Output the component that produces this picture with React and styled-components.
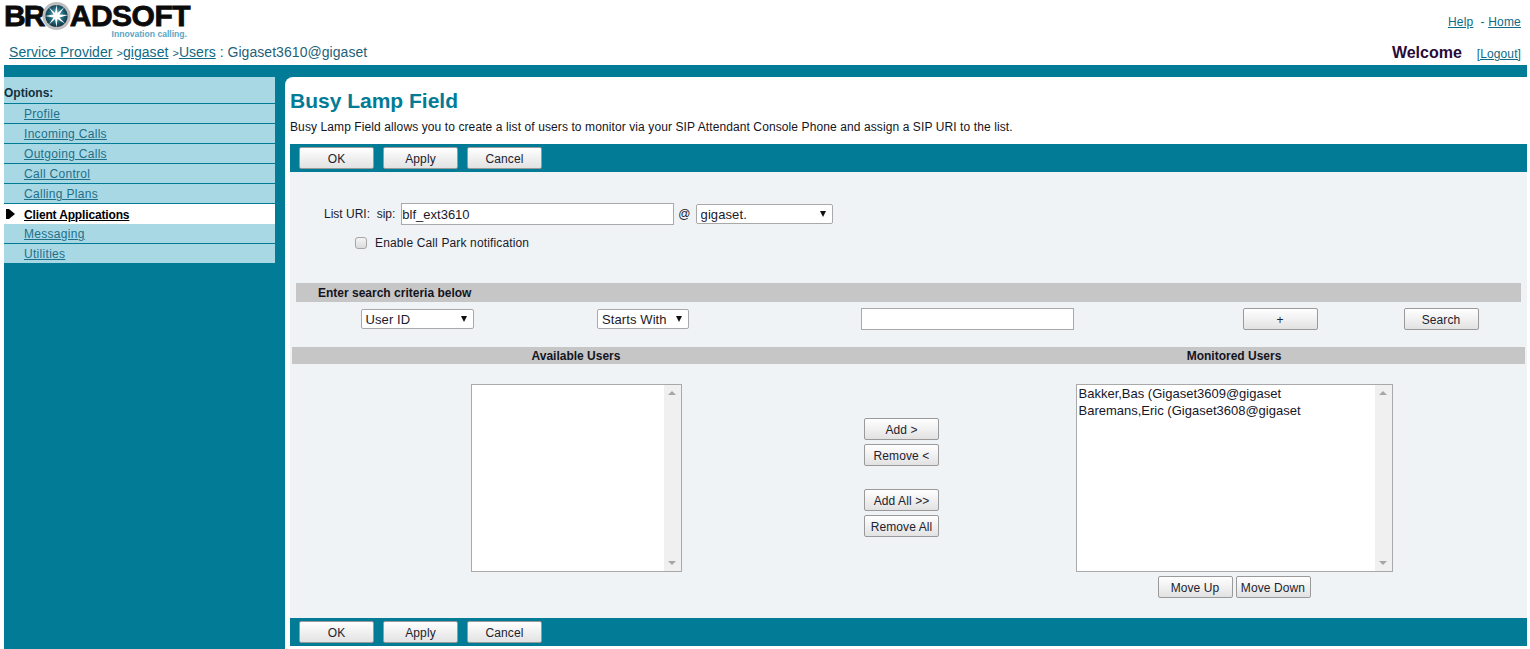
import React from "react";
import styled, { createGlobalStyle } from "styled-components";

const TEAL = "#017b96";
const LINK = "#0f6a85";

const GlobalStyle = createGlobalStyle`
  html, body {
    margin: 0;
    padding: 0;
    background: #fff;
    height: 649px;
    overflow: hidden;
  }
  body {
    font-family: "Liberation Sans", Arial, sans-serif;
    font-size: 12px;
    color: #1a1a2a;
  }
`;

const Page = styled.div`
  width: 1530px;
  height: 649px;
  display: flex;
  flex-direction: column;
  overflow: hidden;
`;

const Header = styled.header`
  height: 65px;
  display: flex;
  flex-direction: column;
  justify-content: space-between;
`;

const TopRow = styled.div`
  display: flex;
  justify-content: space-between;
  padding: 3px 9px 0 4px;
`;

const Logo = styled.div`
  width: 186px;
  height: 36px;
  display: flex;
  flex-direction: column;
`;

const LogoMark = styled.div`
  display: flex;
  align-items: center;
  height: 26px;
  font-size: 30px;
  line-height: 26px;
  font-weight: 700;
  color: #0b0b0b;
  -webkit-text-stroke: 0.8px #0b0b0b;
`;

const LogoWord = styled.span`
  letter-spacing: ${(p) => p.$spacing}px;
  white-space: nowrap;
`;

const StarMark = styled.svg`
  flex: none;
  margin: 0 -1px 0 -2px;
`;

const LogoTag = styled.div`
  align-self: flex-end;
  margin: 0 3px 0 0;
  font-size: 8.6px;
  line-height: 10px;
  font-weight: 700;
  color: #5aa6c4;
`;

const TopLinks = styled.div`
  padding-top: 12px;
  font-size: 12px;
  line-height: 14px;
  letter-spacing: 0.2px;
  color: ${LINK};
`;

const BreadRow = styled.div`
  display: flex;
  justify-content: space-between;
  align-items: flex-end;
  padding: 0 9px 3px 9px;
`;

const Crumbs = styled.div`
  font-size: 14px;
  line-height: 17px;
  letter-spacing: 0.05px;
  color: #1f5f78;
`;

const Chevron = styled.span`
  font-size: 11px;
`;

const Link = styled.a`
  color: ${(p) => p.$color || LINK};
  text-decoration: underline;
  cursor: pointer;
`;

const WelcomeBox = styled.div`
  display: flex;
  align-items: baseline;
  gap: 15px;
`;

const Welcome = styled.span`
  font-size: 16px;
  line-height: 19px;
  font-weight: 700;
  color: #2a0a3a;
`;

const Logout = styled.span`
  font-size: 12px;
  letter-spacing: 0.1px;
`;

const Shell = styled.div`
  flex: 1;
  width: 1523px;
  margin-left: 4px;
  background: ${TEAL};
  padding-top: 12px;
  display: flex;
  min-height: 0;
`;

const Sidebar = styled.nav`
  width: 271px;
  flex: none;
  margin-right: 10px;
`;

const SideTitle = styled.div`
  height: 26px;
  box-sizing: content-box;
  background: #a9d8e5;
  border-bottom: 1px solid ${TEAL};
  font-weight: 700;
  font-size: 12px;
  line-height: 32px;
  color: #14303c;
`;

const SideItem = styled.div`
  position: relative;
  height: ${(p) => (p.$active ? 20 : 19)}px;
  padding-left: 20px;
  background: ${(p) => (p.$active ? "#fff" : "#a9d8e5")};
  border-bottom: ${(p) => (p.$active ? "none" : `1px solid ${TEAL}`)};
  font-weight: ${(p) => (p.$active ? 700 : 400)};
  letter-spacing: ${(p) => (p.$active ? -0.15 : 0.3)}px;
  line-height: ${(p) => (p.$active ? 22 : 20)}px;
  font-size: 12px;
`;

const Pointer = styled.svg`
  position: absolute;
  left: 2px;
  top: 5px;
`;

const Main = styled.main`
  flex: 1;
  min-width: 0;
  background: #fff;
  border-top-left-radius: 8px;
  padding-left: 5px;
  display: flex;
  flex-direction: column;
`;

const Title = styled.h1`
  margin: 12px 0 0 0;
  font-size: 21px;
  line-height: 23px;
  font-weight: 700;
  color: ${TEAL};
`;

const Intro = styled.p`
  margin: 8px 0 0 0;
  font-size: 12px;
  line-height: 14px;
  letter-spacing: 0.1px;
  color: #14141e;
`;

const Toolbar = styled.div`
  height: 28px;
  box-sizing: border-box;
  margin-top: ${(p) => p.$top || 0}px;
  padding: 3px 0 0 9px;
  background: ${TEAL};
  display: flex;
  gap: 9px;
`;

const Button = styled.button`
  width: 75px;
  height: 22px;
  box-sizing: border-box;
  padding: 2px 0 0 0;
  border: 1px solid #9a9a9a;
  border-radius: 2px;
  background: linear-gradient(#ffffff, #e2e2e2);
  font-family: "Liberation Sans", Arial, sans-serif;
  font-size: 12px;
  letter-spacing: 0.1px;
  color: #22222e;
`;

const Content = styled.div`
  height: 446px;
  background: #eff3f6;
  display: flex;
  flex-direction: column;
`;

const UriRow = styled.div`
  display: flex;
  align-items: center;
  height: 22px;
  margin: 31px 0 0 34px;
  font-size: 12px;
`;

const UriInput = styled.input`
  width: 273px;
  height: 22px;
  box-sizing: border-box;
  margin: 0 4px 0 6px;
  padding: 0;
  border: 1px solid #a9a9a9;
  background: #fff;
  font-family: "Liberation Sans", Arial, sans-serif;
  font-size: 13px;
  color: #1a1a2a;
  outline: none;
`;

const SelectWrap = styled.div`
  position: relative;
  width: ${(p) => p.$w}px;
  height: 20px;
  flex: none;
`;

const Select = styled.select`
  width: 100%;
  height: 100%;
  box-sizing: border-box;
  padding: 1px 0 0 4px;
  appearance: none;
  border: 1px solid #a9a9a9;
  border-radius: 2px;
  background: #fff;
  font-family: "Liberation Sans", Arial, sans-serif;
  font-size: 13px;
  letter-spacing: 0.1px;
  color: #1a1a2a;
`;

const Caret = styled.span`
  position: absolute;
  right: 7px;
  top: 7px;
  width: 0;
  height: 0;
  border-left: 3.5px solid transparent;
  border-right: 3.5px solid transparent;
  border-top: 6px solid #111;
  pointer-events: none;
`;

const At = styled.span`
  margin-right: 5px;
`;

const CheckRow = styled.label`
  display: flex;
  align-items: center;
  height: 14px;
  margin: 11px 0 0 65px;
  font-size: 12px;
  letter-spacing: 0.14px;
`;

const Check = styled.input`
  width: 12px;
  height: 12px;
  margin: 0 8px 0 0;
  appearance: none;
  box-sizing: border-box;
  border: 1px solid #a5a5a5;
  border-radius: 3px;
  background: linear-gradient(#f4f4f4, #dcdcdc);
`;

const SearchHead = styled.div`
  height: 19px;
  margin: 33px 6px 0 6px;
  padding-left: 22px;
  background: #c6c6c6;
  font-weight: 700;
  font-size: 12px;
  line-height: 20px;
  color: #14141e;
`;

const SearchRow = styled.div`
  display: grid;
  grid-template-columns: 242px 210px 438px 188px 134px;
  justify-items: center;
  align-items: center;
  height: 22px;
  margin: 6px 0 0 6px;
`;

const SearchInput = styled.input`
  width: 213px;
  height: 22px;
  box-sizing: border-box;
  border: 1px solid #a9a9a9;
  background: #fff;
  outline: none;
`;

const ColHead = styled.div`
  display: grid;
  grid-template-columns: 568px 83px 582px;
  height: 17px;
  margin: 17px 2px 0 2px;
  background: #c6c6c6;
  font-weight: 700;
  font-size: 12px;
  line-height: 18px;
  color: #14141e;
  text-align: center;
`;

const Columns = styled.div`
  display: grid;
  grid-template-columns: 568px 83px 582px;
  margin: 20px 2px 0 2px;
`;

const ListCol = styled.div`
  display: flex;
  flex-direction: column;
  align-items: center;
`;

const ListBox = styled.div`
  width: ${(p) => p.$w}px;
  height: 188px;
  box-sizing: border-box;
  border: 1px solid #a9a9a9;
  background: #fff;
  display: flex;
`;

const ListItems = styled.div`
  flex: 1;
  padding: 0 2px;
  font-size: 13px;
  line-height: 17px;
  color: #16162a;
`;

const ListItem = styled.div`
  white-space: nowrap;
`;

const Scroll = styled.div`
  width: 17px;
  background: #f0f0f0;
  display: flex;
  flex-direction: column;
  justify-content: space-between;
  align-items: center;
  padding: 6px 0;
`;

const Arrow = styled.span`
  width: 0;
  height: 0;
  border-left: 4px solid transparent;
  border-right: 4px solid transparent;
  border-${(p) => (p.$up ? "bottom" : "top")}: 4px solid #a6a6a6;
`;

const MoveRow = styled.div`
  display: flex;
  gap: 3px;
  margin-top: 4px;
`;

const MiddleCol = styled.div`
  display: flex;
  flex-direction: column;
  align-items: center;
  padding-top: 34px;
`;

const MiddleButton = styled(Button)`
  margin-bottom: ${(p) => p.$gap}px;
`;

const Star = () => (
  <StarMark width="29" height="30" viewBox="0 0 30 30">
    <defs>
      <radialGradient id="ball" cx="50%" cy="45%" r="55%">
        <stop offset="0%" stopColor="#7fc6d8" />
        <stop offset="60%" stopColor="#1f6478" />
        <stop offset="100%" stopColor="#0f3442" />
      </radialGradient>
    </defs>
    <circle cx="15" cy="15" r="14.5" fill="#bdbdbd" />
    <circle cx="15" cy="15" r="11.5" fill="url(#ball)" />
    <path
      d="M15 3 L16 12 L23 6 L18 13.5 L27 14 L18 16.5 L24 23 L16 18 L15 27 L13.5 18 L7 24 L12 16.5 L3 15 L12 13.5 L7 6 L13.5 12 Z"
      fill="#fff"
    />
  </StarMark>
);

const sideLinks = ["Profile", "Incoming Calls", "Outgoing Calls", "Call Control", "Calling Plans", "Client Applications", "Messaging", "Utilities"];

const Actions = ({ top }) => (
  <Toolbar $top={top}>
    <Button>OK</Button>
    <Button>Apply</Button>
    <Button>Cancel</Button>
  </Toolbar>
);

const Dropdown = ({ w, value }) => (
  <SelectWrap $w={w}>
    <Select defaultValue={value}>
      <option>{value}</option>
    </Select>
    <Caret />
  </SelectWrap>
);

const UserList = ({ w, users }) => (
  <ListBox $w={w}>
    <ListItems>
      {users.map((u) => (
        <ListItem key={u}>{u}</ListItem>
      ))}
    </ListItems>
    <Scroll>
      <Arrow $up />
      <Arrow />
    </Scroll>
  </ListBox>
);

const App = () => {
  return (
    <Page>
      <GlobalStyle />
      <Header>
        <TopRow>
          <Logo>
            <LogoMark>
              <LogoWord $spacing={-1.8}>BR</LogoWord>
              <Star />
              <LogoWord $spacing={-0.5}>ADSOFT</LogoWord>
            </LogoMark>
            <LogoTag>Innovation calling.</LogoTag>
          </Logo>
          <TopLinks>
            <Link>Help</Link>&nbsp; - <Link>Home</Link>
          </TopLinks>
        </TopRow>
        <BreadRow>
          <Crumbs>
            <Link>Service Provider</Link> <Chevron>&gt;</Chevron>
            <Link>gigaset</Link> <Chevron>&gt;</Chevron>
            <Link>Users</Link> : Gigaset3610@gigaset
          </Crumbs>
          <WelcomeBox>
            <Welcome>Welcome</Welcome>
            <Logout>
              <Link>[Logout]</Link>
            </Logout>
          </WelcomeBox>
        </BreadRow>
      </Header>

      <Shell>
        <Sidebar>
          <SideTitle>Options:</SideTitle>
          {sideLinks.map((name) => {
            const active = name === "Client Applications";
            return (
              <SideItem key={name} $active={active}>
                {active && (
                  <Pointer width="9" height="10" viewBox="0 0 9 10">
                    <path d="M0 0 H3 L9 5 L3 10 H0 Z" fill="#000" />
                  </Pointer>
                )}
                <Link $color={active ? "#000" : "#1c7089"}>{name}</Link>
              </SideItem>
            );
          })}
        </Sidebar>

        <Main>
          <Title>Busy Lamp Field</Title>
          <Intro>Busy Lamp Field allows you to create a list of users to monitor via your SIP Attendant Console Phone and assign a SIP URI to the list.</Intro>
          <Actions top={10} />
          <Content>
            <UriRow>
              List URI:&nbsp; sip:
              <UriInput defaultValue="blf_ext3610" />
              <At>@</At>
              <Dropdown w={137} value="gigaset." />
            </UriRow>
            <CheckRow>
              <Check type="checkbox" />
              Enable Call Park notification
            </CheckRow>

            <SearchHead>Enter search criteria below</SearchHead>
            <SearchRow>
              <Dropdown w={113} value="User ID" />
              <Dropdown w={92} value="Starts With" />
              <SearchInput />
              <Button>+</Button>
              <Button>Search</Button>
            </SearchRow>

            <ColHead>
              <span>Available Users</span>
              <span />
              <span>Monitored Users</span>
            </ColHead>
            <Columns>
              <ListCol>
                <UserList w={211} users={[]} />
              </ListCol>
              <MiddleCol>
                <MiddleButton $gap={4}>Add &gt;</MiddleButton>
                <MiddleButton $gap={23}>Remove &lt;</MiddleButton>
                <MiddleButton $gap={4}>Add All &gt;&gt;</MiddleButton>
                <MiddleButton $gap={0}>Remove All</MiddleButton>
              </MiddleCol>
              <ListCol>
                <UserList w={317} users={["Bakker,Bas (Gigaset3609@gigaset", "Baremans,Eric (Gigaset3608@gigaset"]} />
                <MoveRow>
                  <Button>Move Up</Button>
                  <Button>Move Down</Button>
                </MoveRow>
              </ListCol>
            </Columns>
          </Content>
          <Actions />
        </Main>
      </Shell>
    </Page>
  );
};

export default App;
